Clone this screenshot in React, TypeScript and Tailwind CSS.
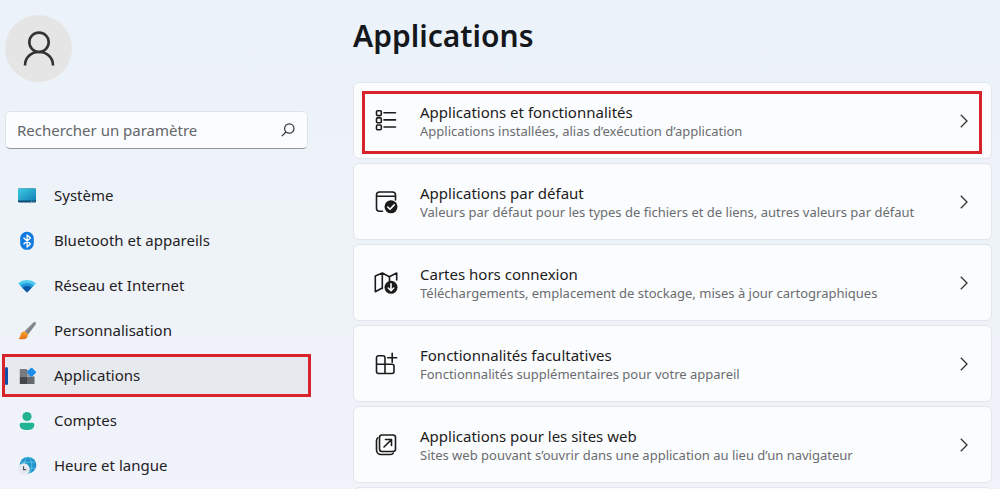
import type { ReactNode } from "react";

const navItems = [
  { id: 1, title: "Système", icon: <SystemIcon /> },
  { id: 2, title: "Bluetooth et appareils", icon: <BluetoothIcon /> },
  { id: 3, title: "Réseau et Internet", icon: <WifiIcon /> },
  { id: 4, title: "Personnalisation", icon: <BrushIcon /> },
  { id: 5, title: "Applications", icon: <AppsIcon />, current: true },
  { id: 6, title: "Comptes", icon: <AccountIcon /> },
  { id: 7, title: "Heure et langue", icon: <ClockIcon /> },
];

const cards = [
  {
    id: 1,
    title: "Applications et fonctionnalités",
    description: "Applications installées, alias d’exécution d’application",
    icon: <ListIcon />,
    marked: true,
  },
  {
    id: 2,
    title: "Applications par défaut",
    description:
      "Valeurs par défaut pour les types de fichiers et de liens, autres valeurs par défaut",
    icon: <DefaultAppIcon />,
  },
  {
    id: 3,
    title: "Cartes hors connexion",
    description:
      "Téléchargements, emplacement de stockage, mises à jour cartographiques",
    icon: <MapIcon />,
  },
  {
    id: 4,
    title: "Fonctionnalités facultatives",
    description: "Fonctionnalités supplémentaires pour votre appareil",
    icon: <FeaturesIcon />,
  },
  {
    id: 5,
    title: "Applications pour les sites web",
    description:
      "Sites web pouvant s’ouvrir dans une application au lieu d’un navigateur",
    icon: <WebAppIcon />,
  },
];

function SystemIcon() {
  return (
    <svg viewBox="0 0 20 20" className="size-5">
      <defs>
        <linearGradient id="screen" x1="0" y1="0" x2="1" y2="1">
          <stop offset="0" stopColor="#3ccbe0" />
          <stop offset="1" stopColor="#1580b8" />
        </linearGradient>
      </defs>
      <rect x="1" y="2.500" width="18" height="14" rx="1.200" fill="#0c4a70" />
      <path d="M2.200 2.500h15.600q1.200 0 1.200 1.200V14.500H1V3.700Q1 2.500 2.200 2.500z" fill="url(#screen)" />
      <path d="M14 15.500h1M16 15.500h1" stroke="#7fc4e4" strokeWidth=".7" />
    </svg>
  );
}

function BluetoothIcon() {
  return (
    <svg viewBox="0 0 20 20" className="size-5">
      <rect x="3.200" y=".8" width="13.600" height="18" rx="6.500" fill="#0f7be0" />
      <path
        d="M6.500 6.800l7 6.200-3.400 3V4l3.400 3-7 6.200"
        fill="none"
        stroke="#fff"
        strokeWidth="1.300"
        strokeLinejoin="round"
      />
    </svg>
  );
}

function WifiIcon() {
  return (
    <svg viewBox="0 0 20 20" className="size-5">
      <path d="M10 16.500L1 7.200Q5 4 10 4t9 3.200z" fill="#4ccbee" />
      <path d="M10 16.500L3.200 9.500Q6 7 10 7t6.800 2.500z" fill="#2397d8" />
      <path d="M10 16.500l-4.700-4.700Q7 10 10 10t4.700 1.800z" fill="#0d57a5" />
    </svg>
  );
}

function BrushIcon() {
  return (
    <svg viewBox="0 0 20 20" className="size-5">
      <defs>
        <linearGradient id="handle" x1="0" y1="0" x2="1" y2="1">
          <stop offset="0" stopColor="#a9adb1" />
          <stop offset="1" stopColor="#5c6064" />
        </linearGradient>
        <linearGradient id="bristle" x1="0" y1="0" x2="0" y2="1">
          <stop offset="0" stopColor="#f9a32a" />
          <stop offset="1" stopColor="#e2701c" />
        </linearGradient>
      </defs>
      <path d="M18.700 1.300q.7.900-.1 2.200L11 13.500 7.500 10.300 16.300 1.600q1.400-1 2.400-.3z" fill="url(#handle)" />
      <path d="M7.500 10.300l3.500 3.200q-.2 4.500-5 4.800-2.700.2-4.500-.6 1.700-.9 1.900-3.200.5-3.700 4.100-4.200z" fill="url(#bristle)" />
    </svg>
  );
}

function AppsIcon() {
  return (
    <svg viewBox="0 0 20 20" className="size-5">
      <path d="M2.800 3H10v7.500H2.800z" fill="#777b80" />
      <path d="M2.800 10.500H10V18H2.800z" fill="#45494d" />
      <path d="M10 10.500h7.500V18H10z" fill="#65696e" />
      <path d="M10 4h4v6.500h-4z" fill="#9a9ea3" />
      <rect x="11" y="2.800" width="7" height="7" rx="1" transform="rotate(45 14.500 6.300)" fill="#1c8fec" />
    </svg>
  );
}

function AccountIcon() {
  return (
    <svg viewBox="0 0 20 20" className="size-5">
      <circle cx="10" cy="5.500" r="4.600" fill="#25b292" />
      <path d="M4.600 11.800h10.800q2 0 2 2 0 5.200-7.400 5.200t-7.400-5.200q0-2 2-2z" fill="#20b394" />
    </svg>
  );
}

function ClockIcon() {
  return (
    <svg viewBox="0 0 20 20" className="size-5">
      <circle cx="11" cy="9.200" r="8.300" fill="#2093c9" />
      <g fill="none" stroke="#64c9e8" strokeWidth=".8">
        <ellipse cx="11" cy="9.200" rx="3.800" ry="8.200" />
        <path d="M3.500 6.200h15M3.500 12.200h15" />
      </g>
      <circle cx="6.800" cy="13.200" r="5.900" fill="#e6e9ed" />
      <path d="M6.500 10.200v3.500h2.700" fill="none" stroke="#4d5560" strokeWidth="1.200" />
    </svg>
  );
}

function LineIcon({ children }: { children: ReactNode }) {
  return (
    <svg
      viewBox="0 0 24 24"
      className="size-6"
      fill="none"
      stroke="#1b1b1b"
      strokeWidth="1.600"
      strokeLinecap="round"
      strokeLinejoin="round"
    >
      {children}
    </svg>
  );
}

function ListIcon() {
  return (
    <LineIcon>
      <rect x="2.500" y="1.800" width="4.800" height="4.800" rx="1" />
      <rect x="2.500" y="8.900" width="4.800" height="4.800" rx="1" />
      <rect x="2.500" y="16" width="4.800" height="4.800" rx="1" />
      <path d="M10 3.700h11.500M10 10.900h11.500M10 18h11.500" />
    </LineIcon>
  );
}

function DefaultAppIcon() {
  return (
    <LineIcon>
      <path d="M8.500 21.300H5.500a3 3 0 0 1-3-3V5a3 3 0 0 1 3-3h13a3 3 0 0 1 3 3v5M2.500 6.300h19" />
      <circle cx="17" cy="16.800" r="6.500" fill="#1b1b1b" stroke="none" />
      <path d="M13.800 17l2.200 2.200 4.200-4.300" stroke="#fff" />
    </LineIcon>
  );
}

function MapIcon() {
  return (
    <LineIcon>
      <path d="M8.300 2L1.300 5v15.800l6.500-3.500M8.300 2l7 3.800L22.700 2v7M8.300 2v15.500M15.500 5.800v4" />
      <circle cx="17" cy="16.300" r="6.500" fill="#1b1b1b" stroke="none" />
      <path d="M17 12.800v6.700M14.300 17l2.700 2.700 2.700-2.700" stroke="#fff" />
    </LineIcon>
  );
}

function FeaturesIcon() {
  return (
    <LineIcon>
      <path d="M11 12.300V5.700a2 2 0 0 0-2-2H4.500a2 2 0 0 0-2 2V19.500a2 2 0 0 0 2 2H18a2 2 0 0 0 2-2v-5.200a2 2 0 0 0-2-2H2.500M11 12.300v9.200" />
      <path d="M18.200 1.200v9M13.700 5.700h9" />
    </LineIcon>
  );
}

function WebAppIcon() {
  return (
    <LineIcon>
      <rect x="5.500" y="2" width="16" height="16.500" rx="2.500" />
      <path d="M3.800 4.800Q2.500 5.700 2.500 7.500V17a4.500 4.500 0 0 0 4.500 4.500h9.500q2 0 2.800-1.300" />
      <path d="M10 14l7.300-7.300M11.500 6.500h6v6" />
    </LineIcon>
  );
}

function Sidebar() {
  return (
    <aside className="w-[308px] shrink-0 pl-[5px] pt-[15px]">
      <div className="flex size-[67px] items-center justify-center rounded-full bg-[#e5e5e5]">
        <svg viewBox="0 0 32 36" className="h-9 w-8" fill="none" stroke="#333" strokeWidth="2.600">
          <circle cx="16" cy="11.300" r="9.700" />
          <path d="M2 34.500C2 26.500 8 21 16 21s14 5.500 14 13.500" />
        </svg>
      </div>
      <div className="mt-[29px] flex h-[38px] items-center rounded-[5px] border border-[#dfe4ea] border-b-[#90959d] bg-[#fbfcfe] pr-3">
        <input
          type="text"
          aria-label="Rechercher un paramètre"
          placeholder="Rechercher un paramètre"
          className="min-w-0 flex-1 bg-transparent pl-[11px] text-[15px] text-gray-800 outline-none placeholder:text-[#62656a]"
        />
        <svg viewBox="0 0 14 14" className="size-3.5" fill="none" stroke="#333" strokeWidth="1.200">
          <circle cx="8.300" cy="5.500" r="4.700" />
          <path d="M5 9L.8 13.200" />
        </svg>
      </div>
      <nav className="mt-7 flex flex-col gap-2">
        {navItems.map((item) => (
          <a
            key={item.id}
            href="#"
            aria-current={item.current ? "page" : undefined}
            className={
              item.current
                ? "flex h-[37px] items-center bg-[#e6e9ee] outline-3 outline-[#d8232a]"
                : "flex h-[37px] items-center"
            }
          >
            <span
              className={
                item.current
                  ? "h-[18px] w-[3px] rounded-full bg-[#0f4fa8]"
                  : "h-[18px] w-[3px]"
              }
            />
            <span className="ml-[9px] mr-[17px]">{item.icon}</span>
            <span className="text-[15px] text-[#1f2124]">{item.title}</span>
          </a>
        ))}
      </nav>
    </aside>
  );
}

function App() {
  return (
    <div className="flex h-screen gap-[45px] overflow-hidden bg-linear-to-b from-[#ecf2fa] via-[#eef3f8] to-[#f0f3fa] pr-2 font-['Noto_Sans',sans-serif]">
      <Sidebar />
      <main className="min-w-0 flex-1">
        <h1 className="pt-4 text-[30px] font-semibold leading-10 text-[#14181c]">
          Applications
        </h1>
        <div className="mt-[26px] flex flex-col gap-1">
          {cards.map((card) => (
            <a
              key={card.id}
              href="#"
              className="relative flex h-[77px] shrink-0 items-center rounded-[6px] border border-[#e1e5ec] bg-[#fbfcfe] pl-5 pr-[23px]"
            >
              {card.icon}
              <div className="ml-[22px] min-w-0 flex-1 pt-px">
                <h2 className="text-[15px] leading-5 text-[#1b1b1b]">{card.title}</h2>
                <p className="text-[13px] leading-[18px] text-[#6a6c70]">
                  {card.description}
                </p>
              </div>
              <svg viewBox="0 0 8 14" className="h-3.5 w-2" fill="none" stroke="#333" strokeWidth="1.300">
                <path d="M.8.800L7 7 .8 13.200" />
              </svg>
              {card.marked && (
                <span className="absolute bottom-1 left-2 right-[9px] top-2 border-3 border-[#d8232a]" />
              )}
            </a>
          ))}
          <div className="h-[77px] shrink-0 rounded-[6px] border border-[#e1e5ec] bg-[#fbfcfe]" />
        </div>
      </main>
    </div>
  );
}

export default App;
